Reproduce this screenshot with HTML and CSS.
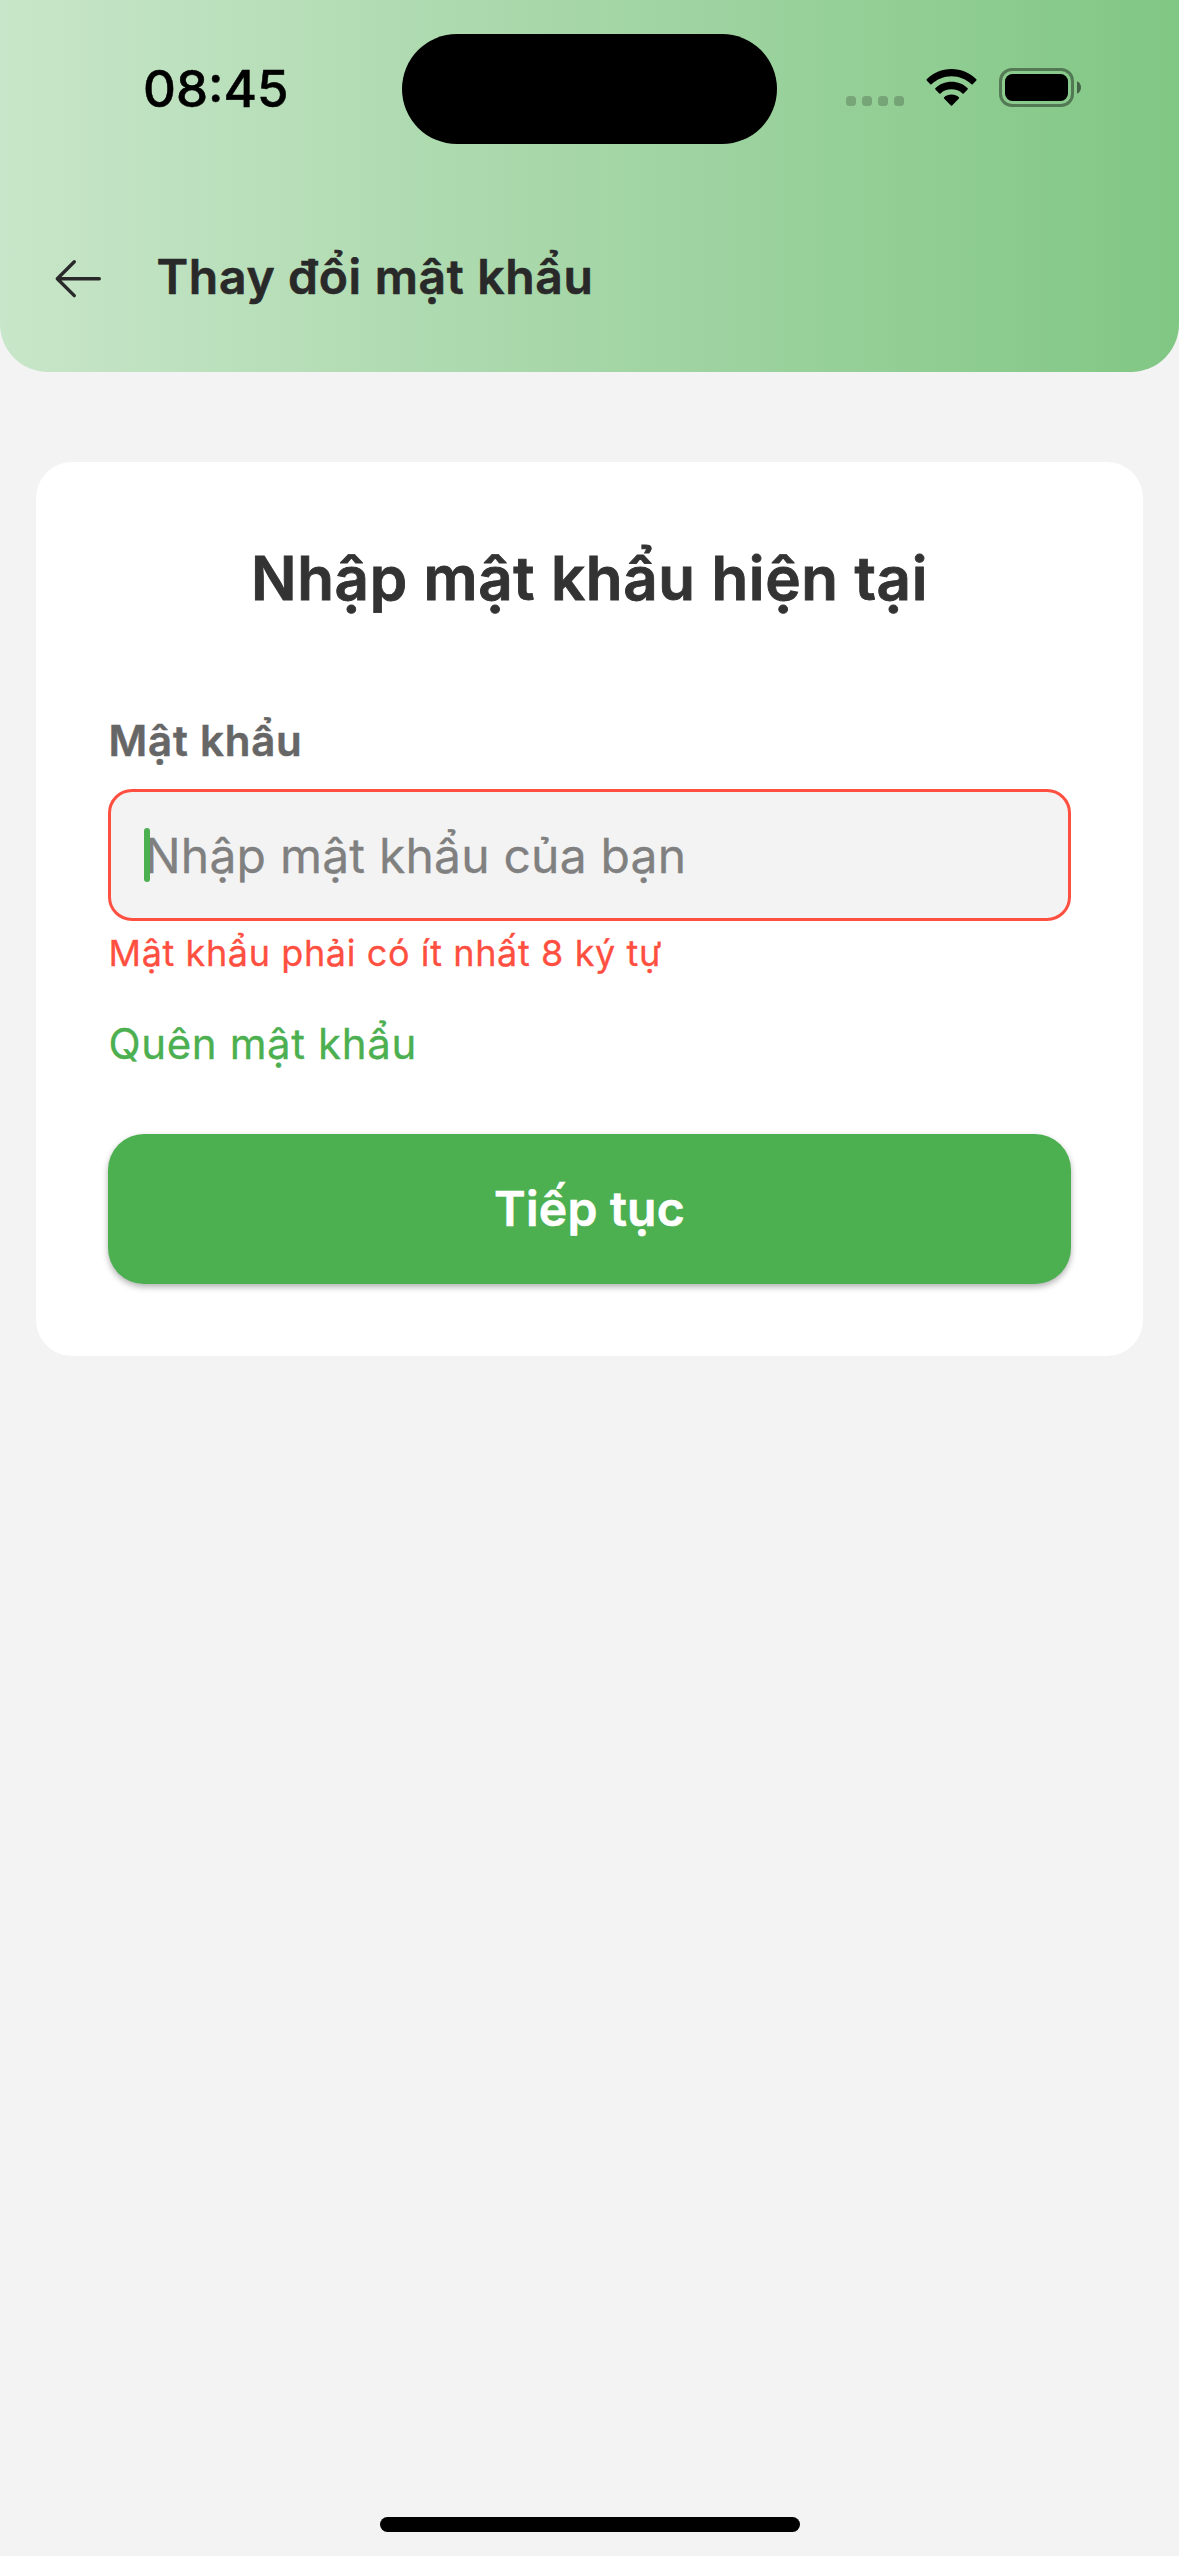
FILE: index.html
```html
<!DOCTYPE html>
<html lang="vi">
<head>
<meta charset="utf-8">
<title>Thay đổi mật khẩu</title>
<link rel="stylesheet" href="styles.css">
</head>
<body>
<div class="screen">
  <header class="header">
    <div class="status-bar">
      <span class="time">08:45</span>
      <div class="island"></div>
      <div class="status-icons">
        <svg class="signal" width="58" height="10" viewBox="0 0 58 10"><rect width="10" height="10" rx="3.5"/><rect x="16" width="10" height="10" rx="3.5"/><rect x="32" width="10" height="10" rx="3.5"/><rect x="48" width="10" height="10" rx="3.5"/></svg>
        <svg class="wifi" width="51" height="37" viewBox="0 0 51 37"><path d="M25.500 0C35.300 0 44 3.900 50.300 10.200C50.700 10.600 50.700 11 50.300 11.400L46.700 15.200C46.300 15.600 45.900 15.600 45.500 15.200C40.200 10.200 33.200 7.200 25.500 7.200S10.800 10.200 5.500 15.200C5.100 15.600 4.700 15.600 4.300 15.200L.7 11.400C.3 11 .3 10.600 .7 10.200C7 3.900 15.700 0 25.500 0ZM25.500 12.800C31.800 12.800 37.500 15 41.600 19.200C42 19.600 42 20 41.600 20.400L37.700 24.400C37.300 24.800 36.900 24.800 36.500 24.400C33.600 21.600 29.700 20.200 25.500 20.200S17.400 21.600 14.500 24.400C14.100 24.800 13.700 24.800 13.300 24.400L9.400 20.400C9 20 9 19.600 9.400 19.200C13.500 15 19.200 12.800 25.500 12.800ZM25.500 25.400C28.300 25.400 30.900 26.400 32.900 28.200C33.300 28.600 33.300 29 32.900 29.400L26.100 36.400C25.700 36.800 25.300 36.800 24.900 36.400L18.100 29.400C17.700 29 17.700 28.600 18.100 28.200C20.100 26.400 22.700 25.400 25.500 25.400Z"/></svg>
        <svg class="battery" width="82" height="39" viewBox="0 0 82 39"><rect x="1.500" y="1.500" width="72" height="36" rx="11.500" fill="none" stroke="#000" stroke-opacity=".4" stroke-width="3"/><rect x="6" y="6" width="63" height="27" rx="7.500"/><path d="M78 13.300C80.600 14.400 82 16.900 82 19.500S80.600 24.600 78 25.700Z" fill-opacity=".5"/></svg>
      </div>
    </div>
    <div class="nav-bar">
      <svg class="back" width="48" height="40" viewBox="0 0 48 40"><path d="M45.300 19.700H3.300M20.300 2.700L3.300 19.700L20.300 36.600"/></svg>
      <h1 class="nav-title">Thay đổi mật khẩu</h1>
    </div>
  </header>
  <main class="card">
    <h2 class="heading">Nhập mật khẩu hiện tại</h2>
    <div class="label">Mật khẩu</div>
    <div class="field"><span class="placeholder">Nhập mật khẩu của bạn</span><span class="caret"></span></div>
    <div class="error">Mật khẩu phải có ít nhất 8 ký tự</div>
    <a class="forgot">Quên mật khẩu</a>
    <div class="button">Tiếp tục</div>
  </main>
  <div class="home-indicator"></div>
</div>
</body>
</html>
```
FILE: styles.css
```css
* { box-sizing: border-box; margin: 0; padding: 0; }
body { font-family: Inter, sans-serif; background: #f3f3f3; white-space: nowrap; }
.screen { width: 1179px; height: 2556px; display: flex; flex-direction: column; }
.header {
  height: 372px;
  border-radius: 0 0 48px 48px;
  background: linear-gradient(90deg, #c8e6c9, #a5d6a7 50%, #81c784);
}
.status-bar { height: 177px; display: grid; grid-template-columns: 402px 375px 402px; }
.time { padding: 57px 0 0 143px; font-size: 51px; line-height: 64px; font-weight: 500; color: #000; -webkit-text-stroke: .5px #000; }
.island { height: 110.500px; margin-top: 33.500px; border-radius: 55.500px; background: #000; }
.status-icons { display: flex; align-items: flex-start; padding-left: 69px; }
.signal { margin-top: 96px; fill: #000; fill-opacity: .2; }
.wifi { margin: 69px 0 0 22px; }
.battery { margin: 68px 0 0 22px; }
.nav-bar { display: flex; padding: 64px 0 0 54px; }
.back { margin-top: 18px; fill: none; stroke: #292929; stroke-width: 3.400; stroke-linecap: round; stroke-linejoin: round; }
.nav-title { margin-left: 54.500px; font-size: 48px; line-height: 72px; font-weight: 600; letter-spacing: .68px; color: #292929; -webkit-text-stroke: .6px #292929; }
.card {
  display: flex; flex-direction: column;
  margin: 90px 36px 0; height: 894px; padding: 80px 72px 72px;
  border-radius: 36px; background: #fff;
}
.heading { text-align: center; font-size: 60px; line-height: 72px; font-weight: 600; letter-spacing: .65px; color: #333; -webkit-text-stroke: .9px #333; }
.label { margin-top: 102px; padding-left: .5px; font-size: 42px; line-height: 50px; font-weight: 600; letter-spacing: .8px; color: #666; -webkit-text-stroke: .5px #666; }
.field {
  position: relative; display: flex; align-items: center;
  height: 132px; margin-top: 23px; padding-left: 33.500px;
  border: 3px solid #ff4f40; border-radius: 24px; background: #f3f3f3;
}
.placeholder { padding-top: 1px; font-size: 48px; line-height: 72px; letter-spacing: .2px; color: #808080; -webkit-text-stroke: .3px #808080; }
.caret { position: absolute; left: 33px; top: 36px; width: 6px; height: 54px; border-radius: 3px; background: #4caf50; }
.error { margin-top: 10px; padding-left: .5px; font-size: 36px; line-height: 44px; letter-spacing: .61px; color: #ff4f40; -webkit-text-stroke: .3px #ff4f40; }
.forgot { margin-top: 44px; padding-left: .5px; font-size: 42px; line-height: 50px; letter-spacing: .62px; color: #4caf50; -webkit-text-stroke: .3px #4caf50; }
.button {
  height: 150px; margin-top: 65px; border-radius: 36px; background: #4caf50;
  box-shadow: 0 3px 6px rgba(0, 0, 0, .3);
  color: #fff; font-size: 48px; line-height: 150px; font-weight: 600; letter-spacing: .24px; text-align: center; -webkit-text-stroke: .6px #fff;
}
.home-indicator { width: 420px; height: 15px; margin: auto auto 24px; border-radius: 8px; background: #000; }
```
